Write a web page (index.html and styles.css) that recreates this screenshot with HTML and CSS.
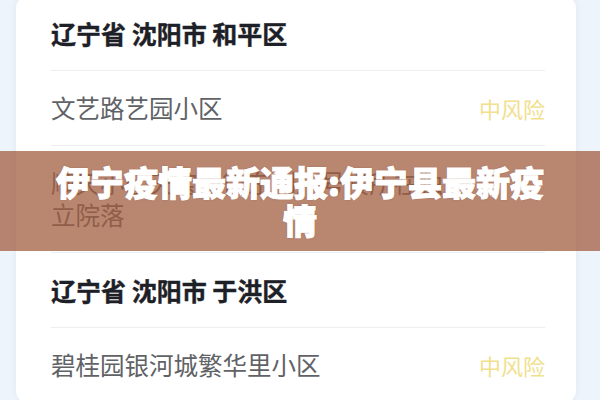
FILE: index.html
```html
<!DOCTYPE html>
<html lang="zh-CN">
<head>
  <meta charset="UTF-8" />
  <title>伊宁疫情最新通报</title>
  <link rel="stylesheet" href="styles.css">
</head>
<body>
  <div class="card">
    <div class="row area">辽宁省 沈阳市 和平区</div>
    <div class="row">
      <span class="place">文艺路艺园小区</span>
      <span class="risk">中风险</span>
    </div>
    <div class="row">
      <span class="place narrow">顺天小区天宝南街东侧八号楼所在独立院落</span>
    </div>
    <div class="row area">辽宁省 沈阳市 于洪区</div>
    <div class="row">
      <span class="place">碧桂园银河城繁华里小区</span>
      <span class="risk">中风险</span>
    </div>
  </div>

  <div class="banner">
    <h1>伊宁疫情最新通报:伊宁县最新疫情</h1>
  </div>
</body>
</html>
```

FILE: styles.css
```css
html, body { margin: 0; height: 100%; overflow: hidden; }
body { background: #edf4fb; font-family: "Noto Sans CJK SC", "Noto Sans", sans-serif; position: relative; }

.card { margin: -4px 24px 0 16px; background: #fff; border-radius: 12px; padding: 0 31px 0 35px; box-shadow: 0 0 6px rgba(120,150,190,0.12); }
.row { display: flex; align-items: center; justify-content: space-between; gap: 24px; padding: 21px 0; line-height: 32px; border-bottom: 1px solid #eceef0; font-size: 24.5px; color: #606266; }
.row.area { font-weight: 700; color: #1d2127; font-size: 25px; -webkit-text-stroke: 0.4px #1d2127; }
.place { flex: 1; }
.place.narrow { max-width: 400px; }
.risk { font-size: 22px; color: #f1e08e; flex-shrink: 0; }

/* title strip laid over the list */
.banner { position: absolute; left: 0; right: 0; top: 151px; height: 100px; display: flex; align-items: center; justify-content: center; padding: 0 50px; box-sizing: border-box; background: rgba(160, 92, 62, 0.74); }
.banner h1 { margin: 0; font-size: 34px; line-height: 38px; font-weight: 900; color: #fff; text-align: center; -webkit-text-stroke: 1px #fff; text-shadow: 0 0 2px rgba(60,30,20,0.35); }
```
